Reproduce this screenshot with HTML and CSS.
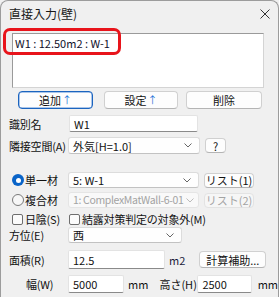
FILE: index.html
```html
<!DOCTYPE html>
<html lang="ja">
<head>
<meta charset="utf-8">
<link rel="stylesheet" href="styles.css">
</head>
<body>
<div class="window">
  <div class="titlebar">
    <span class="title">直接入力(壁)</span>
    <svg class="close" width="10" height="10" viewBox="0 0 10 10"><path d="M0.5 0.5 L9.5 9.5 M9.5 0.5 L0.5 9.5" stroke="#333" stroke-width="1" fill="none"/></svg>
  </div>

  <div class="listbox"><div class="item">W1 : 12.50m2 : W-1</div></div>

  <div class="btnrow">
    <div class="btn focus w-add">追加<span class="arr">↑</span></div>
    <div class="btn w-set">設定<span class="arr">↑</span></div>
    <div class="btn w-del">削除</div>
  </div>

  <div class="row r-name">
    <span class="lbl">識別名</span>
    <div class="tb w-name">W1</div>
  </div>

  <div class="row r-adj">
    <span class="lbl">隣接空間(A)</span>
    <div class="combo w-adj"><span class="ctext">外気[H=1.0]</span><svg class="chev" width="8" height="5" viewBox="0 0 8 5"><path d="M0.5 0.5 L4 4 L7.5 0.5" stroke="#666" fill="none"/></svg></div>
    <div class="btn small w-q">?</div>
  </div>

  <div class="row r-r1">
    <span class="radio on"></span><span class="rlbl">単一材</span>
    <div class="combo w-mat"><span class="ctext">5: W-1</span><svg class="chev" width="8" height="5" viewBox="0 0 8 5"><path d="M0.5 0.5 L4 4 L7.5 0.5" stroke="#666" fill="none"/></svg></div>
    <div class="btn small w-list">リスト(1)</div>
  </div>

  <div class="row r-r2">
    <span class="radio"></span><span class="rlbl">複合材</span>
    <div class="combo disabled w-mat"><span class="ctext narrow">1: ComplexMatWall-6-01</span><svg class="chev" width="8" height="5" viewBox="0 0 8 5"><path d="M0.5 0.5 L4 4 L7.5 0.5" stroke="#bbb" fill="none"/></svg></div>
    <div class="btn small disabled w-list">リスト(2)</div>
  </div>

  <div class="row r-chk">
    <span class="check"></span><span class="clbl c1">日陰(S)</span>
    <span class="check"></span><span class="clbl">結露対策判定の対象外(M)</span>
  </div>

  <div class="row r-dir">
    <span class="lbl">方位(E)</span>
    <div class="combo w-dir"><span class="ctext">西</span><svg class="chev" width="8" height="5" viewBox="0 0 8 5"><path d="M0.5 0.5 L4 4 L7.5 0.5" stroke="#666" fill="none"/></svg></div>
  </div>

  <div class="row r-area">
    <span class="lbl">面積(R)</span>
    <div class="tb w-area">12.5</div>
    <span class="unit m2">m2</span>
    <div class="btn w-calc">計算補助...</div>
  </div>

  <div class="row r-size">
    <span class="lbl lbl-w">幅(W)</span>
    <div class="tb w-width">5000</div>
    <span class="unit mm1">mm</span>
    <span class="hlbl">高さ(H)</span>
    <div class="tb w-height">2500</div>
    <span class="unit mm2">mm</span>
  </div>

  <div class="highlight"></div>
</div>
</body>
</html>
```

FILE: styles.css
```css
* { box-sizing: border-box; }
html, body { margin: 0; padding: 0; background: #f0f0f0; }
body {
  font-family: "Noto Sans CJK JP", "Noto Sans", sans-serif;
  font-size: 11px;
  color: #111;
}
.window {
  position: relative;
  width: 279px;
  height: 297px;
  background: #f0f0f0;
  border: 1px solid #9c9c9c;
  border-bottom: none;
  border-radius: 8px 8px 0 0;
  overflow: hidden;
}
.titlebar {
  height: 27px;
  display: flex;
  align-items: center;
  justify-content: space-between;
  padding: 0 8px 2px 8px;
}
.title { font-size: 12px; line-height: 14px; color: #1a1a1a; }
.close { margin-top: 1px; }

.listbox {
  margin: 5px 0 0 11px;
  width: 252px;
  height: 55px;
  background: #fff;
  border: 1px solid #a9a9a9;
  border-color: #9a9a9a #d4d4d4 #d4d4d4 #9a9a9a;
  padding: 2px 0 0 2px;
}
.item { font-size: 11px; line-height: 14px; color: #10102a; }

.btnrow {
  margin: 3px 0 0 17px;
  display: flex;
  height: 18px;
}
.btn {
  height: 18px;
  background: #fdfdfd;
  border: 1px solid #d0d0d0;
  border-bottom-color: #b4b4b4;
  border-radius: 4px;
  display: flex;
  align-items: center;
  justify-content: center;
  font-size: 11px;
  line-height: 14px;
  color: #111;
  white-space: nowrap;
}
.btn.focus { border: 1px solid #1b64bf; box-shadow: inset 0 0 0 0.5px #5a8fd6; }
.arr { color: #1e74d8; font-size: 10px; margin-left: 1px; }
.w-add { width: 75px; }
.w-set { width: 74px; margin-left: 11px; }
.w-del { width: 76px; margin-left: 8px; }

.row {
  display: flex;
  align-items: center;
  padding-left: 8px;
}
.lbl { width: 59px; flex: none; white-space: nowrap; line-height: 14px; letter-spacing: -0.2px; }
.lbl-w { padding-left: 17px; }

.r-name { margin-top: 6px; height: 17px; }
.r-adj { margin-top: 5px; height: 17px; }
.r-r1 { margin-top: 18px; height: 16px; padding-left: 11px; }
.r-r2 { margin-top: 4px; height: 16px; padding-left: 11px; }
.r-chk { margin-top: 4px; height: 14px; padding-left: 11px; }
.r-dir { margin-top: 1px; height: 16px; }
.r-area { margin-top: 7px; height: 19px; }
.r-size { margin-top: 6px; height: 18px; }

.tb {
  height: 100%;
  background: #fff;
  border: 1px solid #e3e3e3;
  border-bottom: 1px solid #8a8a8a;
  border-radius: 2px;
  padding: 0 0 0 4px;
  display: flex;
  align-items: center;
  line-height: 14px;
  color: #111;
}
.w-name { width: 129px; margin-left: 1px; }
.w-area { width: 97px; }
.w-width { width: 61px; }
.w-height { width: 59px; }

.combo {
  height: 17px;
  background: #fefefe;
  border: 1px solid #dcdcdc;
  border-bottom-color: #c2c2c2;
  border-radius: 3px;
  display: flex;
  align-items: center;
  justify-content: space-between;
  padding: 0 7px 0 4px;
  white-space: nowrap;
}
.ctext { line-height: 14px; white-space: nowrap; }
.ctext.narrow { font-size: 10.5px; letter-spacing: -0.35px; }
.combo.disabled { background: #f9f9f9; border-color: #e5e5e5; color: #a3a3a3; }
.combo .chev { flex: none; margin-left: 2px; }
.w-adj { width: 132px; }
.w-mat { width: 131px; height: 16px; }
.w-dir { width: 114px; height: 16px; }

.btn.small { height: 15px; }
.w-q { width: 21px; margin-left: 5px; }
.w-list { width: 50px; margin-left: 5px; }
.btn.disabled { color: #a3a3a3; background: #f6f6f6; border-color: #e3e3e3; }

.radio {
  width: 12px; height: 12px;
  border-radius: 50%;
  border: 1px solid #7a7a7a;
  background: #f7f7f7;
  flex: none;
  position: relative;
}
.radio.on { border: none; background: #0a64c8; }
.radio.on::after {
  content: "";
  position: absolute;
  left: 3.5px; top: 3.5px;
  width: 5px; height: 5px;
  border-radius: 50%;
  background: #fff;
}
.rlbl { width: 44px; padding-left: 1px; flex: none; line-height: 14px; }

.check {
  width: 11px; height: 11px;
  border: 1px solid #6e6e6e;
  border-radius: 2px;
  background: #fbfbfb;
  flex: none;
}
.clbl { padding-left: 2px; line-height: 14px; white-space: nowrap; letter-spacing: -0.2px; }
.c1 { width: 46px; flex: none; }

.unit { line-height: 14px; white-space: nowrap; }
.m2 { margin-left: 4px; color: #1b1b3a; }
.w-calc { width: 67px; height: 17px; margin-left: 14px; }
.mm1 { margin-left: 4px; }
.hlbl { margin-left: 11px; width: 38px; flex: none; white-space: nowrap; line-height: 14px; }
.mm2 { margin-left: 6px; }

.highlight {
  position: absolute;
  left: 2px;
  top: 27px;
  width: 118px;
  height: 27px;
  border: 3px solid #e8141b;
  border-radius: 7px;
}
```
